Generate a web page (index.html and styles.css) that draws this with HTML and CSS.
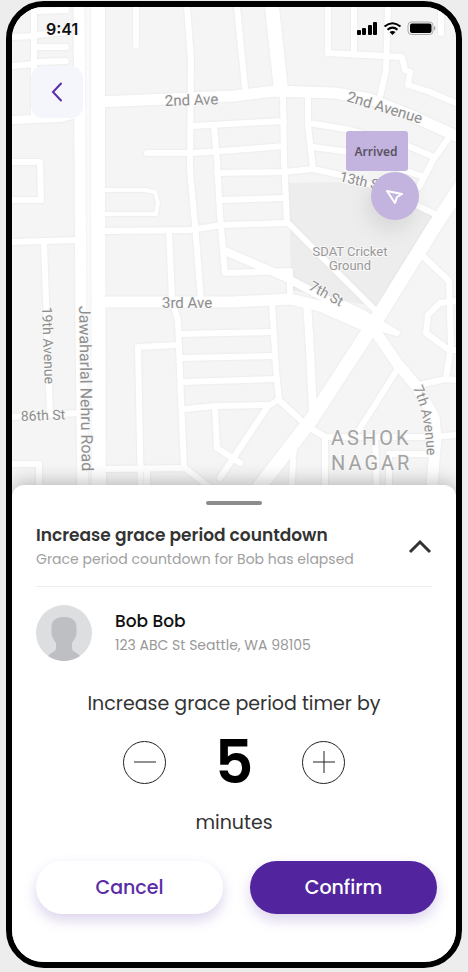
FILE: index.html
```html
<!DOCTYPE html>
<html lang="en">
<head>
<meta charset="utf-8">
<meta name="viewport" content="width=device-width, initial-scale=1">
<title>Increase grace period countdown</title>
<link rel="stylesheet" href="styles.css">
</head>
<body>
<main class="phone">
  <section class="map" aria-label="Map">
    <svg class="map-canvas" viewBox="12 7 444 490" preserveAspectRatio="xMidYMid slice">
      <path class="park" d="M289 183L335 182L375 188L437 217L381 308L291 290Z"/>
      <path class="median" d="M87 7V497"/>
      <g class="roads">
        <g class="minor">
          <path d="M34 7V120M12 37L34 36M37 11L66 10M37 35L66 32M37 47H66M37 62L66 61M12 66L34 64"/>
          <path d="M12 162H40L41 200H12M12 242L78 240M44 242L46 300L50 415M12 417L78 413M12 464H39V497"/>
          <path d="M136 7V46M187 7L191 60L190 170L195 225L201 300"/>
          <path d="M105 231L190 230L222 225L287 223M169 232L172 300L178 320L181 400L184 468"/>
          <path d="M193 126L284 121M147 153L193 153L234 150L284 146M214 126L217 160L220 215L225 273L290 271V298"/>
          <path d="M217 173L284 172L313 169L345 176L380 188L437 215M222 200L284 198"/>
          <path d="M283 97L284 160L287 222L380 315M237 7L245 88"/>
          <path d="M308 97V125L313 168M309 123L345 129L408 146L434 157M313 147L350 152L424 177"/>
          <path d="M328 7V53L402 57L405 70L410 72L408 85L430 92L456 103M354 7V55M388 7L386 70L380 97M441 7V33"/>
          <path d="M450 136L433 160L419 187"/>
          <path d="M424 257L449 281L451 345L446 378M456 301L440 303L428 315L426 333L449 350H456M419 385L446 379L456 380"/>
          <path d="M397 370L359 430M272 303L276 370L279 400L308 427L325 437V497M278 400L268 406L220 478"/>
          <path d="M180 334L272 332M182 358L274 356M184 382L276 379M185 409L215 406L268 405M215 408L217 448L240 463"/>
          <path d="M178 345L138 347L141 497M105 469L185 468L213 490M147 470V497M309 427L325 437H434L456 435M375 437L377 497M389 497V454H432M294 445L291 497"/>
        </g>
        <path class="lane" d="M105 190H145L155 192L158 203L156 214H105"/>
        <g class="medium">
          <path d="M12 120L60 118L80 113M225 251L285 277L375 325M307 303L310 350L313 410"/>
          <path class="spur" d="M340 302L365 314L397 333L372 326"/>
        </g>
        <g class="major">
          <path d="M79 7L80 160L81 330L83 497"/>
          <path d="M98 102L234 96L275 91L335 93L370 99L410 115L456 136"/>
          <path d="M100 302H234L290 299L320 306L375 330"/>
          <path class="wide" d="M272 7L281 90"/>
          <path class="wide" d="M98 7V160L99 497"/>
          <path class="wide" d="M462 185L434 227L380 314L311 420L257 490"/>
          <path d="M371 325L397 363L417 387L434 417L436 438L431 497"/>
        </g>
      </g>
      <path id="avenue" class="guide" d="M413 388Q427 418 427 466"/>
      <g class="street">
        <text transform="translate(165 106) rotate(-2)">2nd Ave</text>
        <text transform="translate(346 101) rotate(17)">2nd Avenue</text>
        <text transform="translate(162 308)">3rd Ave</text>
        <text class="small" transform="translate(339 181) rotate(13)">13th St</text>
        <text class="small" transform="translate(308 289) rotate(29)">7th St</text>
        <text class="small" transform="translate(21 421) rotate(-2)">86th St</text>
        <text class="small" transform="translate(42 307) rotate(88)">19th Avenue</text>
        <text class="road-name" transform="translate(79 306) rotate(89)">Jawaharlal Nehru Road</text>
        <text class="small"><textPath href="#avenue">7th Avenue</textPath></text>
      </g>
      <g class="place">
        <text x="350" y="256">SDAT Cricket</text>
        <text x="350" y="270">Ground</text>
      </g>
      <g class="district">
        <text x="331" y="445">ASHOK</text>
        <text x="331" y="470">NAGAR</text>
      </g>
      <g class="pin">
        <circle class="pin-shadow" cx="391" cy="206" r="25"/>
        <rect x="346" y="131" width="62" height="40" rx="3"/>
        <circle cx="395" cy="196" r="24"/>
        <text x="376" y="156">Arrived</text>
        <path class="pin-arrow" d="M387 191L402 194L397 197L395 203Z"/>
      </g>
    </svg>
    <header class="status">
      <span>9:41</span>
      <svg class="status-icons" viewBox="0 0 80 16" aria-hidden="true">
        <rect x="1" y="9" width="4" height="5" rx="1"/><rect x="6" y="7" width="4" height="7" rx="1"/><rect x="12" y="4" width="4" height="10" rx="1"/><rect x="17" y="1" width="4" height="13" rx="1"/>
        <path class="wave" d="M28.500 5.500Q36.500 -1 44.500 5.500M31.500 8.800Q36.500 4.500 41.500 8.800"/>
        <path d="M33.500 11Q36.500 8.800 39.500 11L36.500 14Z"/>
        <rect class="battery" x="52" y="1" width="25" height="12.500" rx="3.500"/>
        <rect x="54" y="2.500" width="21.500" height="9.500" rx="2"/>
        <path class="terminal" d="M78 5V9.500Q79.500 8.800 79.500 7.200T78 5Z"/>
      </svg>
    </header>
    <button class="back" type="button" aria-label="Back">
      <svg viewBox="0 0 12 20"><path d="M10 1.500L2 10L10 18.500"/></svg>
    </button>
  </section>

  <section class="sheet">
    <div class="handle"></div>
    <header class="sheet-head">
      <div>
        <h1>Increase grace period countdown</h1>
        <p class="note">Grace period countdown for Bob has elapsed</p>
      </div>
      <button class="collapse" type="button" aria-label="Collapse">
        <svg viewBox="0 0 24 16"><path d="M2 13L12 3L22 13"/></svg>
      </button>
    </header>
    <div class="person">
      <svg class="avatar" viewBox="0 0 56 56" aria-hidden="true">
        <circle cx="28" cy="28" r="28" fill="#dcdee0"/>
        <path fill="#bdbfc3" d="M12 51C15 47 20 47 20 43V38C17 34 15 31 15.500 24C15 16 19 12 28 12S41 16 40.500 24C41 31 39 34 36 38V43C36 47 41 47 44 51A28 28 0 0 1 12 51Z"/>
      </svg>
      <div>
        <h2>Bob Bob</h2>
        <p class="address">123 ABC St Seattle, WA 98105</p>
      </div>
    </div>
    <p class="prompt">Increase grace period timer by</p>
    <div class="stepper">
      <button type="button" aria-label="Decrease"><svg viewBox="0 0 24 24"><path d="M1 12H23"/></svg></button>
      <output>5</output>
      <button type="button" aria-label="Increase"><svg viewBox="0 0 24 24"><path d="M1 12H23M12 1V23"/></svg></button>
    </div>
    <p class="unit">minutes</p>
    <div class="actions">
      <button class="cancel" type="button">Cancel</button>
      <button class="confirm" type="button">Confirm</button>
    </div>
  </section>
</main>
</body>
</html>
```

FILE: styles.css
```css
* { box-sizing: border-box; }

body {
  margin: 0;
  padding: 1px 6px 4px;
  background: #ededed;
  font-family: Poppins, Inter, "Liberation Sans", sans-serif;
  color: #333;
}

h1, h2, p { margin: 0; }

button {
  padding: 0;
  border: 0;
  background: none;
  color: inherit;
  font: inherit;
}

svg { display: block; fill: none; }

.phone {
  display: flex;
  flex-direction: column;
  min-height: calc(100vh - 5px);
  overflow: hidden;
  border: 6px solid #000;
  border-radius: 38px;
  background: #fff;
}

/* Map */
.map {
  position: relative;
  flex: 1;
  min-height: 480px;
  background: #f5f5f5;
}

.map-canvas {
  position: absolute;
  inset: 0;
  width: 100%;
  height: 100%;
}

.park { fill: #ededed; }
.median { stroke: #fafafa; stroke-width: 20px; }

.roads {
  stroke: #fff;
  stroke-linecap: round;
  stroke-linejoin: round;
  filter: drop-shadow(0 0 1px rgba(0, 0, 0, 0.07));
}

.minor { stroke-width: 6px; }
.lane { stroke-width: 4px; }
.medium { stroke-width: 8px; }
.major { stroke-width: 11px; }
.wide { stroke-width: 14px; }
.spur { stroke-width: 6px; }

.street, .place, .district {
  fill: #8e8e8e;
  font-family: Roboto, sans-serif;
  stroke: #f8f8f8;
  stroke-width: 2px;
  paint-order: stroke;
}

.street { font-size: 15px; }
.street .small { font-size: 14px; }
.street .road-name { font-size: 16px; }
.guide { fill: none; stroke: none; }
.place { font-size: 13px; text-anchor: middle; fill: #999; }
.district { font-size: 20px; letter-spacing: 3px; fill: #a3a3a3; }

.pin { fill: #c2b4df; }
.pin-shadow { fill: rgba(0, 0, 0, 0.08); filter: blur(9px); }
.pin text {
  fill: #5a5264;
  font: 600 12px "Noto Sans", sans-serif;
  text-anchor: middle;
}
.pin-arrow {
  fill: none;
  stroke: #fff;
  stroke-width: 2px;
  stroke-linejoin: round;
}

.status {
  position: relative;
  display: flex;
  justify-content: space-between;
  align-items: center;
  padding: 10px 20px 0 34px;
  color: #111;
  font: 600 16px/24px Inter, sans-serif;
}

.status-icons { width: 80px; height: 16px; fill: #000; }
.wave { fill: none; stroke: #000; stroke-width: 2px; }
.status-icons .battery { fill: none; stroke: #aaa; }
.terminal { fill: #aaa; }

.back {
  position: relative;
  display: grid;
  place-items: center;
  width: 52px;
  height: 52px;
  margin: 25px 0 0 19px;
  border-radius: 12px;
  background: #f5f6fb;
}

.back svg { width: 12px; height: 20px; stroke: #5a2ca8; stroke-width: 2px; stroke-linecap: round; }

/* Bottom sheet */
.sheet {
  position: relative;
  margin-top: -12px;
  padding: 16px 24px 48px;
  border-radius: 12px 12px 0 0;
  background: #fff;
  box-shadow: 0 -1px 20px rgba(0, 0, 0, 0.3);
}

.handle {
  width: 56px;
  height: 4px;
  margin: 0 auto;
  border-radius: 2px;
  background: #8c8c8c;
}

.sheet-head {
  display: flex;
  justify-content: space-between;
  align-items: center;
  padding: 18px 0 15px;
  border-bottom: 1px solid #ececec;
}

h1 { font-size: 17px; font-weight: 600; line-height: 24px; }
.note { color: #a0a0a0; font-size: 14px; line-height: 24px; }
.collapse svg { width: 24px; height: 16px; stroke: #333; stroke-width: 3px; }

.person {
  display: flex;
  align-items: center;
  gap: 23px;
  padding-top: 18px;
}

.avatar { width: 56px; height: 56px; }
h2 { color: #111; font-size: 17px; font-weight: 500; line-height: 24px; }
.address { color: #999; font-size: 14px; line-height: 24px; }

.prompt, .unit {
  font-size: 19px;
  line-height: 32px;
  text-align: center;
}

.prompt { margin-top: 27px; }

.stepper {
  display: flex;
  justify-content: center;
  align-items: center;
  gap: 48px;
  margin: 10px 0 13px;
}

.stepper button {
  display: grid;
  place-items: center;
  width: 43px;
  height: 43px;
  border: 1px solid #222;
  border-radius: 50%;
}

.stepper button svg { width: 24px; height: 24px; stroke: #222; stroke-width: 1px; }

output {
  width: 40px;
  color: #000;
  font-size: 60px;
  font-weight: 600;
  line-height: 64px;
  text-align: center;
}

.actions {
  display: flex;
  gap: 27px;
  margin: 22px -5px 0 0;
}

.actions button {
  flex: 1;
  height: 53px;
  border-radius: 27px;
  box-shadow: 0 6px 14px rgba(82, 37, 158, 0.2);
  font-size: 19px;
  font-weight: 500;
}

.actions .cancel { background: #fff; color: #5a2ca8; }
.actions .confirm { background: #52259e; color: #fff; }
```
